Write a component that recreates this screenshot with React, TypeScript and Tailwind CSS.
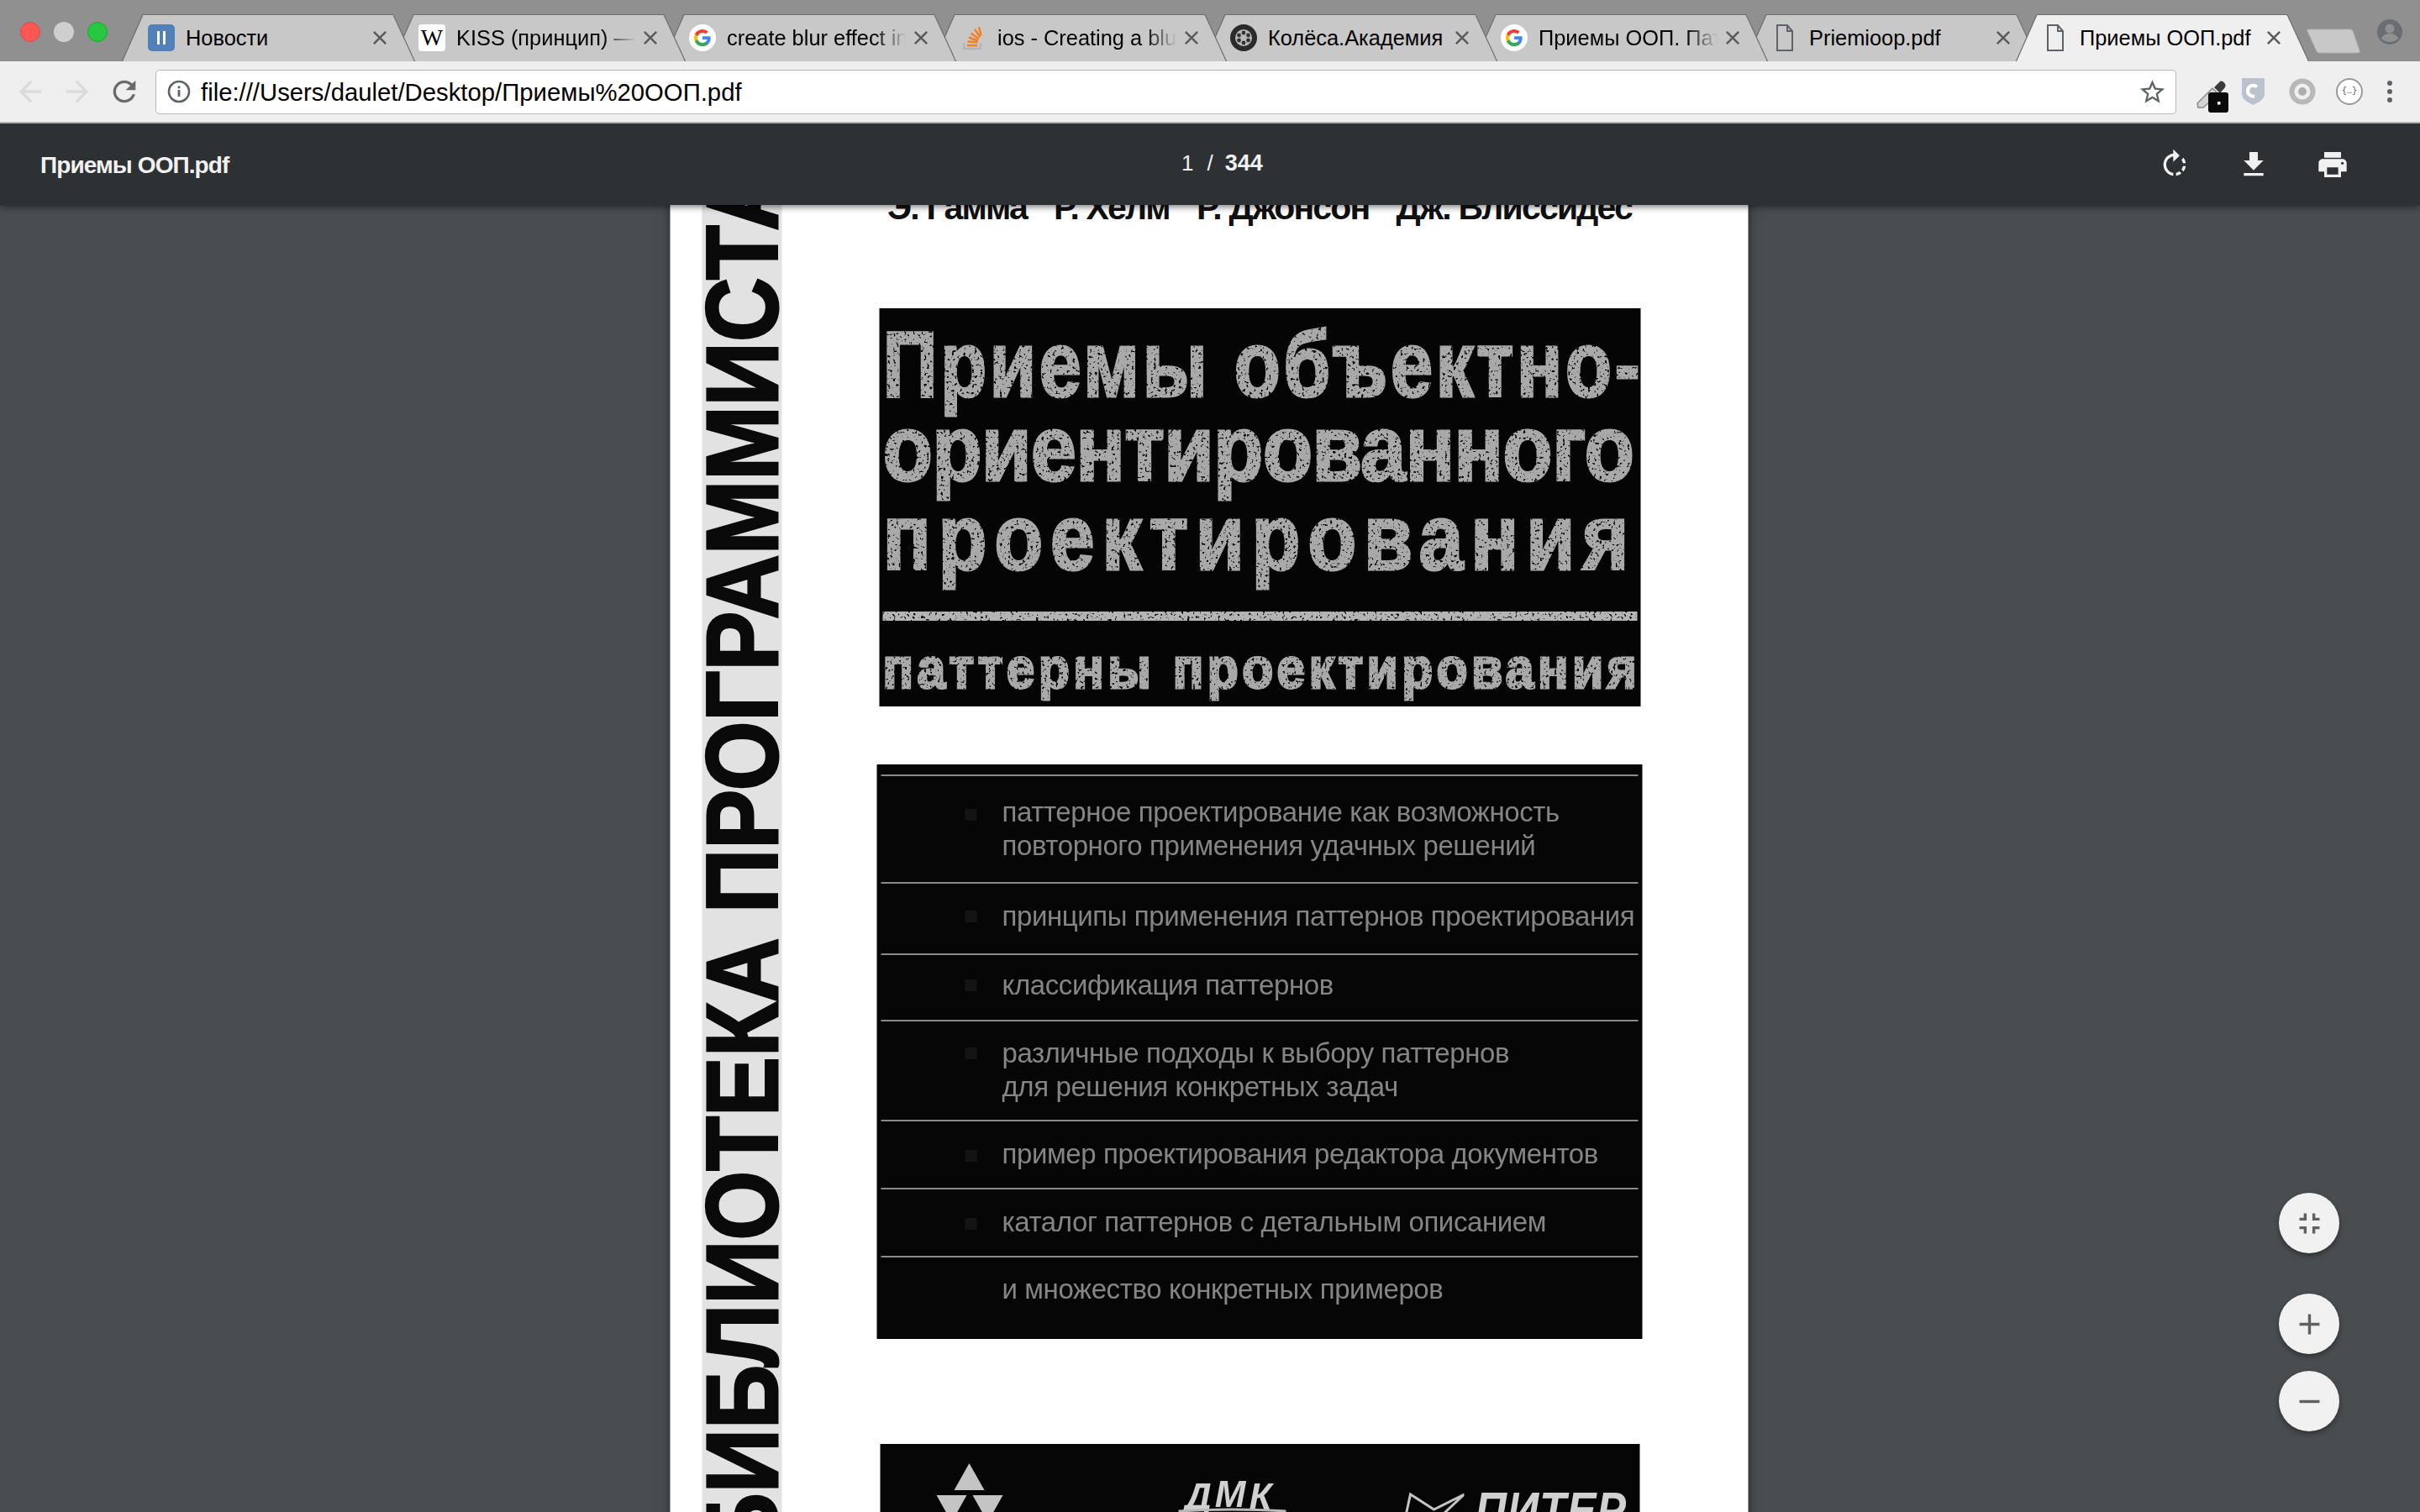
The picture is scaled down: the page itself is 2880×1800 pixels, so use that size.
import React from "react";

const G = () => (
  <svg viewBox="0 0 32 32" className="w-[32px] h-[32px]">
    <circle cx="16" cy="16" r="16" fill="#fff" />
    <g transform="translate(5 5) scale(0.4583)">
      <path fill="#4285F4" d="M45.12 24.5c0-1.56-.14-3.06-.4-4.5H24v8.51h11.84c-.51 2.75-2.06 5.08-4.39 6.64v5.52h7.11c4.16-3.83 6.56-9.47 6.56-16.17z" />
      <path fill="#34A853" d="M24 46c5.94 0 10.92-1.97 14.56-5.33l-7.11-5.52c-1.97 1.32-4.49 2.1-7.45 2.1-5.73 0-10.58-3.87-12.31-9.07H4.34v5.7C7.96 41.07 15.4 46 24 46z" />
      <path fill="#FBBC05" d="M11.69 28.18c-.44-1.32-.69-2.73-.69-4.18s.25-2.86.69-4.18v-5.7H4.34C2.85 17.09 2 20.45 2 24s.85 6.91 2.34 9.88l7.35-5.7z" />
      <path fill="#EA4335" d="M24 10.75c3.23 0 6.13 1.11 8.41 3.29l6.31-6.31C34.91 4.18 29.93 2 24 2 15.4 2 7.96 6.93 4.34 14.12l7.35 5.7c1.73-5.2 6.58-9.07 12.31-9.07z" />
    </g>
  </svg>
);

const Doc = () => (
  <svg viewBox="0 0 32 32" className="w-[32px] h-[32px]" fill="none" stroke="#5f6368" strokeWidth="2">
    <path d="M7 1h12l6 7v23H7z" />
    <path d="M19 1v7h6" />
  </svg>
);

const Vk = () => (
  <div className="w-[32px] h-[32px] rounded-[5px] bg-[#5181b8] flex items-center justify-center gap-[4px]">
    <div className="w-[3px] h-[16px] bg-white" />
    <div className="w-[3px] h-[16px] bg-white" />
  </div>
);

const Wiki = () => (
  <div className="w-[32px] h-[32px] rounded-[4px] bg-white flex items-center justify-center text-[28px] leading-none text-black font-['Liberation_Serif',serif]">
    W
  </div>
);

const So = () => (
  <svg viewBox="0 0 32 32" className="w-[32px] h-[32px]">
    <path d="M5 22v7h20v-7" fill="none" stroke="#b5b5b5" strokeWidth="2.4" />
    <g stroke="#f48024" strokeWidth="2.6">
      <path d="M9 25h12" />
      <path d="M9.5 20.5l12 .8" />
      <path d="M11 15.5l11 4" />
      <path d="M13.5 10.5l9.5 6.8" />
      <path d="M18 6l6.5 9" />
      <path d="M23 3l2.5 10" />
    </g>
  </svg>
);

const Wheel = () => (
  <svg viewBox="0 0 32 32" className="w-[32px] h-[32px]">
    <circle cx="16" cy="16" r="16" fill="#2b2b2b" />
    <circle cx="16" cy="16" r="10" fill="#b9b9b9" />
    <g fill="#333">
      <circle cx="16" cy="10" r="2.4" />
      <circle cx="16" cy="22" r="2.4" />
      <circle cx="10.5" cy="13" r="2.4" />
      <circle cx="21.5" cy="13" r="2.4" />
      <circle cx="10.5" cy="19" r="2.4" />
      <circle cx="21.5" cy="19" r="2.4" />
    </g>
  </svg>
);

const tabs = [
  { t: "Новости", i: <Vk /> },
  { t: "KISS (принцип) — Википедия", i: <Wiki />, fade: true },
  { t: "create blur effect in ios", i: <G />, fade: true },
  { t: "ios - Creating a blur effect", i: <So />, fade: true },
  { t: "Колёса.Академия", i: <Wheel /> },
  { t: "Приемы ООП. Паттерны", i: <G />, fade: true },
  { t: "Priemioop.pdf", i: <Doc /> },
  { t: "Приемы ООП.pdf", i: <Doc />, active: true },
];

const Tab = ({ t, i, active, fade, z }: { t: string; i: React.ReactNode; active?: boolean; fade?: boolean; z: number }) => (
  <div className="relative w-[351px] h-[56px] shrink-0 -mr-[29px] flex items-center pl-[31px]" style={{ zIndex: active ? 30 : z }}>
    <svg viewBox="0 0 351 56" className="absolute inset-0 w-[351px] h-[56px]">
      <path d="M0 57L25 .5H323L349 57" fill={active ? "#efefef" : "#c8c8c8"} stroke="#6e6e6e" strokeWidth="1.2" />
    </svg>
    <div className="relative w-[32px] h-[32px] shrink-0">{i}</div>
    <div className={`relative ml-[13px] w-[218px] overflow-hidden whitespace-nowrap text-[25.4px] leading-[32px] text-black ${fade ? "[mask-image:linear-gradient(to_right,black_80%,transparent_98%)]" : ""}`}>
      {t}
    </div>
    <svg viewBox="0 0 20 20" className="relative w-[26px] h-[26px]" stroke="#5a5a5a" strokeWidth="1.9">
      <path d="M4.5 4.5l11 11M15.5 4.5l-11 11" />
    </svg>
  </div>
);

const Fab = ({ d, cls }: { d: string; cls: string }) => (
  <button className={`w-[72px] h-[72px] rounded-full bg-[#f1f1f1] flex items-center justify-center shadow-[0_3px_6px_rgba(0,0,0,0.4)] ${cls}`}>
    <svg viewBox="0 0 24 24" className="w-[41px] h-[41px]" fill="#606060">
      <path d={d} />
    </svg>
  </button>
);

const listRows = [
  { h: "h-[128px]", b: "top-[39px]", t: "", l: ["паттерное проектирование как возможность", "повторного применения удачных решений"] },
  { h: "h-[85px]", b: "top-[32px]", t: "-mt-[6px]", l: ["принципы применения паттернов проектирования"] },
  { h: "h-[79px]", b: "top-[29px]", t: "-mt-[6px]", l: ["классификация паттернов"] },
  { h: "h-[119px]", b: "top-[31px]", t: "-mt-[2px]", l: ["различные подходы к выбору паттернов", "для решения конкретных задач"] },
  { h: "h-[81px]", b: "top-[34px]", t: "-mt-[2px]", l: ["пример проектирования редактора документов"] },
  { h: "h-[81px]", b: "top-[34px]", t: "-mt-[2px]", l: ["каталог паттернов с детальным описанием"] },
];

const big = "inline-block origin-left [-webkit-text-stroke:3px_#a9a9a9]";

export default function App() {
  return (
    <div className="w-[2880px] h-[1800px] overflow-hidden flex flex-col font-['Liberation_Sans',Arial,sans-serif]">
      <svg className="absolute w-0 h-0">
        <filter id="grain" x="0" y="0" width="100%" height="100%">
          <feTurbulence type="fractalNoise" baseFrequency="0.3" numOctaves="2" seed="4" result="n" />
          <feColorMatrix in="n" type="matrix" values="0 0 0 0 0 0 0 0 0 0 0 0 0 0 0 0 0 0 -9 6.5" result="m" />
          <feComposite in="SourceGraphic" in2="m" operator="in" />
        </filter>
      </svg>

      {/* tab strip */}
      <div className="h-[73px] shrink-0 bg-[#909090] flex items-start relative">
        <div className="w-[145px] shrink-0 h-full flex items-start pt-[26px] pl-[24px] gap-[16px]">
          <div className="w-[24px] h-[24px] rounded-full bg-[#fc5753] border border-[#df4744]" />
          <div className="w-[24px] h-[24px] rounded-full bg-[#cfcfcf]" />
          <div className="w-[24px] h-[24px] rounded-full bg-[#27c83f] border border-[#1aab29]" />
        </div>
        <div className="flex items-start pt-[17px]">
          {tabs.map((x, n) => (
            <Tab key={n} t={x.t} i={x.i} active={x.active} fade={x.fade} z={20 - n} />
          ))}
        </div>
        <svg viewBox="0 0 64 32" className="w-[64px] h-[32px] ml-[24px] mt-[33px] shrink-0">
          <path d="M2 2H52Q54 2 55 4L63 27Q64 30 60 30H16Q13 30 12 28L1 4Q0 2 2 2Z" fill="#c8c8c8" stroke="#b0b0b0" />
        </svg>
        <svg viewBox="0 0 32 32" className="w-[32px] h-[32px] ml-auto mr-[20px] mt-[22px] shrink-0">
          <circle cx="16" cy="16" r="15" fill="#6a6d72" />
          <circle cx="16" cy="12" r="5.5" fill="#909090" />
          <path d="M6 24c2-5 6-6 10-6s8 1 10 6c-2.5 2.5-6 4-10 4s-7.500-1.500-10-4z" fill="#909090" />
        </svg>
      </div>

      {/* address bar */}
      <div className="h-[74px] shrink-0 bg-[#efefef] border-b-2 border-[#b4b4b4] flex items-center relative z-20">
        <div className="flex items-center pl-[16px] gap-[16px] w-[185px] shrink-0">
          <svg viewBox="0 0 24 24" className="w-[40px] h-[40px]" fill="#dadada"><path d="M20 11H7.830l5.590-5.590L12 4l-8 8 8 8 1.410-1.410L7.830 13H20v-2z" /></svg>
          <svg viewBox="0 0 24 24" className="w-[40px] h-[40px]" fill="#dadada"><path d="M12 4l-1.410 1.410L16.170 11H4v2h12.170l-5.580 5.590L12 20l8-8z" /></svg>
          <svg viewBox="0 0 24 24" className="w-[40px] h-[40px]" fill="#6a6a6a"><path d="M17.650 6.350C16.200 4.900 14.210 4 12 4c-4.420 0-7.990 3.580-7.990 8s3.570 8 7.990 8c3.730 0 6.840-2.550 7.730-6h-2.080c-.82 2.330-3.040 4-5.650 4-3.310 0-6-2.690-6-6s2.690-6 6-6c1.660 0 3.140.69 4.220 1.780L13 11h7V4l-2.350 2.350z" /></svg>
        </div>
        <div className="w-[2405px] h-[53px] shrink-0 bg-white border border-[#b8b8b8] rounded-[5px] flex items-center pl-[13px] pr-[10px]">
          <svg viewBox="0 0 28 28" className="w-[28px] h-[28px] shrink-0">
            <circle cx="14" cy="14" r="12" fill="none" stroke="#5f6368" strokeWidth="2.600" />
            <rect x="12.600" y="12" width="2.800" height="8" fill="#5f6368" />
            <rect x="12.600" y="7.500" width="2.800" height="2.800" fill="#5f6368" />
          </svg>
          <span className="ml-[12px] mt-[2px] text-[29.3px] leading-none text-black">file:///Users/daulet/Desktop/Приемы%20ООП.pdf</span>
          <svg viewBox="0 0 24 24" className="w-[35px] h-[35px] ml-auto" fill="#5f6368">
            <path d="M22 9.240l-7.190-.620L12 2 9.190 8.630 2 9.240l5.460 4.730L5.820 21 12 17.270 18.180 21l-1.630-7.030L22 9.240zM12 15.400l-3.760 2.270 1-4.280-3.320-2.880 4.380-.380L12 6.100l1.710 4.040 4.380.380-3.320 2.880 1 4.280L12 15.400z" />
          </svg>
        </div>
        <div className="flex items-center pl-[23px]">
          <svg viewBox="0 0 40 40" className="w-[40px] h-[40px] shrink-0 mt-[9px]">
            <path d="M2 29L20 11l7 7L9 34H3z" fill="#d4d4d4" stroke="#8c8c8c" strokeWidth="1.500" />
            <path d="M22 10l7-7c3-2 8 3 6 7l-6 7z" fill="#3b3b3b" />
            <rect x="15" y="16" width="24" height="24" rx="3" fill="#0a0a0a" />
            <rect x="26" y="27" width="3.500" height="3.500" fill="#fff" />
          </svg>
          <svg viewBox="0 0 27 32" className="w-[27px] h-[32px] ml-[15px] shrink-0">
            <path d="M0 0H27V19C27 25 20 29 13.500 32 7 29 0 25 0 19Z" fill="#bcc2cc" />
            <path d="M18 10.500a6.500 6.500 0 1 0-3 11" fill="none" stroke="#fff" strokeWidth="4" />
          </svg>
          <svg viewBox="0 0 32 32" className="w-[32px] h-[32px] ml-[29px] shrink-0">
            <circle cx="16" cy="16" r="12.500" fill="none" stroke="#b8b8b8" strokeWidth="6" />
            <circle cx="16" cy="16" r="5" fill="#aeaeae" />
          </svg>
          <div className="w-[32px] h-[32px] ml-[24px] shrink-0 rounded-full bg-white border-2 border-[#9a9a9a] flex items-center justify-center text-[10px] leading-none text-[#555] font-['Liberation_Mono',monospace] whitespace-nowrap">
            {"{…}"}
          </div>
          <div className="ml-[29px] flex flex-col gap-[4px] shrink-0">
            <div className="w-[6px] h-[6px] rounded-full bg-[#5f6368]" />
            <div className="w-[6px] h-[6px] rounded-full bg-[#5f6368]" />
            <div className="w-[6px] h-[6px] rounded-full bg-[#5f6368]" />
          </div>
        </div>
      </div>

      {/* pdf toolbar */}
      <div className="h-[97px] shrink-0 bg-[#2e3134] flex items-center pl-[48px] pr-[84px] relative z-10 shadow-[0_2px_8px_rgba(0,0,0,0.55)]">
        <div className="w-[1358px] shrink-0 mt-[2px] text-[28px] leading-none font-bold text-[#f1f1f1] tracking-[-0.9px]">Приемы ООП.pdf</div>
        <div className="-mt-[3px] text-[26px] leading-none text-[#f1f1f1] flex items-center whitespace-nowrap">
          <span className="font-normal">1</span>
          <span className="ml-[16px]">/</span>
          <span className="ml-[14px] font-bold text-[27px]">344</span>
        </div>
        <div className="ml-auto flex items-center gap-[54px]">
          <svg viewBox="0 0 24 24" className="w-[40px] h-[40px]" fill="#f1f1f1"><path d="M15.550 5.550L11 1v3.070C7.060 4.560 4 7.920 4 12s3.050 7.440 7 7.930v-2.020c-2.840-.480-5-2.940-5-5.910s2.160-5.430 5-5.910V10l4.550-4.450zM19.930 11c-.170-1.390-.720-2.730-1.620-3.890l-1.420 1.420c.540.750.880 1.600 1.020 2.470h2.020zM13 17.900v2.020c1.390-.170 2.740-.710 3.900-1.610l-1.440-1.440c-.750.540-1.590.890-2.460 1.030zm3.890-2.420l1.420 1.410c.900-1.160 1.450-2.500 1.620-3.890h-2.020c-.140.870-.480 1.720-1.020 2.480z" /></svg>
          <svg viewBox="0 0 24 24" className="w-[40px] h-[40px]" fill="#f1f1f1"><path d="M19 9h-4V3H9v6H5l7 7 7-7zM5 18v2h14v-2H5z" /></svg>
          <svg viewBox="0 0 24 24" className="w-[40px] h-[40px]" fill="#f1f1f1"><path d="M19 8H5c-1.660 0-3 1.340-3 3v6h4v4h12v-4h4v-6c0-1.660-1.340-3-3-3zm-3 11H8v-5h8v5zm3-7c-.550 0-1-.450-1-1s.450-1 1-1 1 .450 1 1-.450 1-1 1zm-1-9H6v4h12V3z" /></svg>
        </div>
      </div>

      {/* viewer */}
      <main className="flex-1 relative overflow-hidden bg-[#4a4d50] flex justify-center">
        <div className="w-[1283px] h-[1644px] shrink-0 -mt-[34px] bg-white flex shadow-[0_0_12px_rgba(0,0,0,0.5)] -translate-x-[1.500px]">
          {/* spine */}
          <div className="ml-[38px] w-[95px] h-full bg-[#e2e2e2] overflow-hidden flex flex-col justify-end items-center shrink-0">
            <div className="scale-y-[0.885] origin-bottom shrink-0">
              <div className="[writing-mode:vertical-rl] rotate-180 text-[120px] leading-[95px] font-bold text-[#0a0a0a] whitespace-nowrap [-webkit-text-stroke:3px_#0a0a0a]">
                БИБЛИОТЕКА ПРОГРАММИСТА
              </div>
            </div>
          </div>

          <div className="w-[940px] ml-[99px] flex flex-col items-center shrink-0">
            <div className="h-[157px] shrink-0 w-full pt-[14px] flex justify-center gap-[32px] text-[41px] leading-[46px] font-bold text-[#111] whitespace-nowrap tracking-[-1.800px]">
              <span>Э. Гамма</span>
              <span>Р. Хелм</span>
              <span>Р. Джонсон</span>
              <span>Дж. Влиссидес</span>
            </div>

            {/* cover title */}
            <div className="w-[906px] h-[474px] bg-[#050505] overflow-hidden shrink-0">
              <div className="flex flex-col text-[#a9a9a9] font-bold h-full [filter:url(#grain)]">
                <div className="h-[123px] shrink-0 flex items-end pl-[4px] whitespace-nowrap text-[112px] leading-[112px]">
                  <span className={`${big} scale-x-[0.81] tracking-[4px]`}>Приемы объектно-</span>
                </div>
                <div className="h-[100px] shrink-0 flex items-end pl-[4px] whitespace-nowrap text-[112px] leading-[112px]">
                  <span className={`${big} scale-x-[0.87] tracking-[-1px]`}>ориентированного</span>
                </div>
                <div className="h-[106px] shrink-0 flex items-end pl-[4px] whitespace-nowrap text-[112px] leading-[112px]">
                  <span className={`${big} scale-x-[0.85] tracking-[10px]`}>проектирования</span>
                </div>
                <div className="mt-[32px] mx-[4px] h-[11px] bg-[#b4b4b4] shrink-0" />
                <div className="mt-[20px] pl-[4px] whitespace-nowrap text-[68px] leading-[72px]">
                  <span className={`${big} scale-x-[0.89] tracking-[5px] [-webkit-text-stroke:1.500px_#a9a9a9]`}>паттерны проектирования</span>
                </div>
              </div>
            </div>

            {/* list */}
            <div className="mt-[69px] w-[911px] h-[684px] bg-[#060606] flex flex-col pt-[12px] text-[#858585] shrink-0">
              {listRows.map((r, n) => (
                <div key={n} className={`${r.h} shrink-0 mx-[5px] border-t-2 border-[#8a8a8a] flex items-center pl-[144px] relative`}>
                  <div className={`w-[14px] h-[14px] bg-[#141414] absolute left-[100px] ${r.b}`} />
                  <div className={`${r.t} text-[33px] leading-[40px] whitespace-nowrap blur-[0.7px] tracking-[-0.400px]`}>
                    {r.l.map((s, k) => (
                      <div key={k}>{s}</div>
                    ))}
                  </div>
                </div>
              ))}
              <div className="flex-1 mx-[5px] border-t-2 border-[#8a8a8a] pl-[144px] pt-[18px]">
                <div className="text-[33px] leading-[40px] whitespace-nowrap blur-[0.7px] tracking-[-0.400px]">и множество конкретных примеров</div>
              </div>
            </div>

            {/* publishers */}
            <div className="mt-[125px] w-[904px] h-[120px] bg-[#060606] shrink-0 flex items-start text-[#d0d0d0] overflow-hidden blur-[0.4px]">
              <svg viewBox="0 0 80 70" className="w-[80px] h-[70px] ml-[67px] mt-[23px] shrink-0" fill="#c4c4c4">
                <path d="M39 0L57 32H21Z" />
                <path d="M0 38H36L18 70Z" />
                <path d="M43 38H79L61 70Z" />
              </svg>
              <div className="ml-[216px] mt-[38px] w-[112px] relative flex items-center justify-center font-bold italic text-[44px] leading-none whitespace-nowrap">
                <span className="-rotate-[14px] translate-y-[3px]">Д</span>
                <span className="mx-[4px]">М</span>
                <span className="rotate-[14px] translate-y-[3px]">К</span>
                <svg viewBox="0 0 132 12" className="absolute left-[-10px] top-[38px] w-[132px] h-[12px]" fill="none" stroke="#b8b8b8" strokeWidth="3">
                  <path d="M2 4Q66 0 130 4" />
                </svg>
              </div>
              <svg viewBox="0 0 76 50" className="w-[76px] h-[50px] ml-[153px] mt-[56px] shrink-0" fill="none" stroke="#c4c4c4" strokeWidth="3">
                <path d="M2 50L12 4 40 22 76 4 42 36 30 50" />
              </svg>
              <div className="ml-[13px] mt-[48px] text-[62px] leading-none font-bold italic whitespace-nowrap scale-x-[0.84] origin-left tracking-[1px]">ПИТЕР</div>
            </div>
          </div>
        </div>

        <Fab cls="absolute left-[2712px] top-[1176px]" d="M5 16h3v3h2v-5H5v2zm3-8H5v2h5V5H8v3zm6 11h2v-3h3v-2h-5v5zm2-11V5h-2v5h5V8h-3z" />
        <Fab cls="absolute left-[2712px] top-[1296px]" d="M19 13h-6v6h-2v-6H5v-2h6V5h2v6h6v2z" />
        <Fab cls="absolute left-[2712px] top-[1388px]" d="M19 13H5v-2h14v2z" />
      </main>
    </div>
  );
}
